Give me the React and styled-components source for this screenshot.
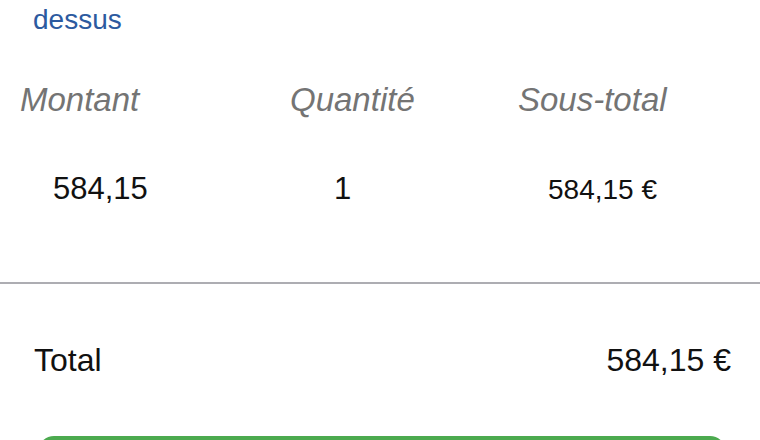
import React from 'react';
import styled, { createGlobalStyle } from 'styled-components';

const GlobalStyle = createGlobalStyle`
  html, body {
    margin: 0;
    padding: 0;
    background: #ffffff;
  }
  body {
    font-family: "Liberation Sans", Arial, sans-serif;
    color: #111111;
  }
`;

const Page = styled.div`
  width: 760px;
  height: 440px;
  overflow: hidden;
  background: #ffffff;
`;

const LinkText = styled.p`
  margin: -28px 0 0;
  padding: 0 20px 0 33px;
  font-size: 28px;
  line-height: 32px;
  color: #2c5a9f;
  white-space: nowrap;
`;

const Row = styled.div`
  display: grid;
  grid-template-columns: 270px 230px 1fr;
  align-items: baseline;
  margin-top: ${p => p.$top}px;
`;

const HeadCell = styled.div`
  padding-left: ${p => p.$indent}px;
  font-size: 33px;
  line-height: 40px;
  font-style: italic;
  color: #747474;
`;

const ValueCell = styled.div`
  padding-left: ${p => p.$indent}px;
  font-size: ${p => p.$size || 31}px;
  line-height: 40px;
  color: #111111;
`;

const Divider = styled.hr`
  margin: 72px 0 0;
  border: 0;
  height: 2px;
  background: #adadb2;
`;

const TotalRow = styled.div`
  display: flex;
  justify-content: space-between;
  align-items: baseline;
  margin-top: 56px;
  padding: 0 29px 0 34px;
  font-size: 32px;
  line-height: 40px;
  color: #111111;
`;

const PayButton = styled.button`
  display: block;
  width: calc(100% - 72px);
  height: 56px;
  margin: 56px 34px 0 38px;
  border: 0;
  border-radius: 16px;
  background: #4caa4f;
  color: #ffffff;
  font-family: inherit;
  font-size: 28px;
`;

export default function App() {
  return (
    <Page>
      <GlobalStyle />
      <LinkText>
        Consultez le détail de la facture via le lien ci-
        <br />
        dessus
      </LinkText>

      <Row $top={44}>
        <HeadCell $indent={20}>Montant</HeadCell>
        <HeadCell $indent={20}>Quantité</HeadCell>
        <HeadCell $indent={18}>Sous-total</HeadCell>
      </Row>

      <Row $top={49}>
        <ValueCell $indent={53}>584,15</ValueCell>
        <ValueCell $indent={64}>1</ValueCell>
        <ValueCell $indent={48} $size={28}>584,15 €</ValueCell>
      </Row>

      <Divider />

      <TotalRow>
        <span>Total</span>
        <span>584,15 €</span>
      </TotalRow>

      <PayButton>Payer</PayButton>
    </Page>
  );
}
